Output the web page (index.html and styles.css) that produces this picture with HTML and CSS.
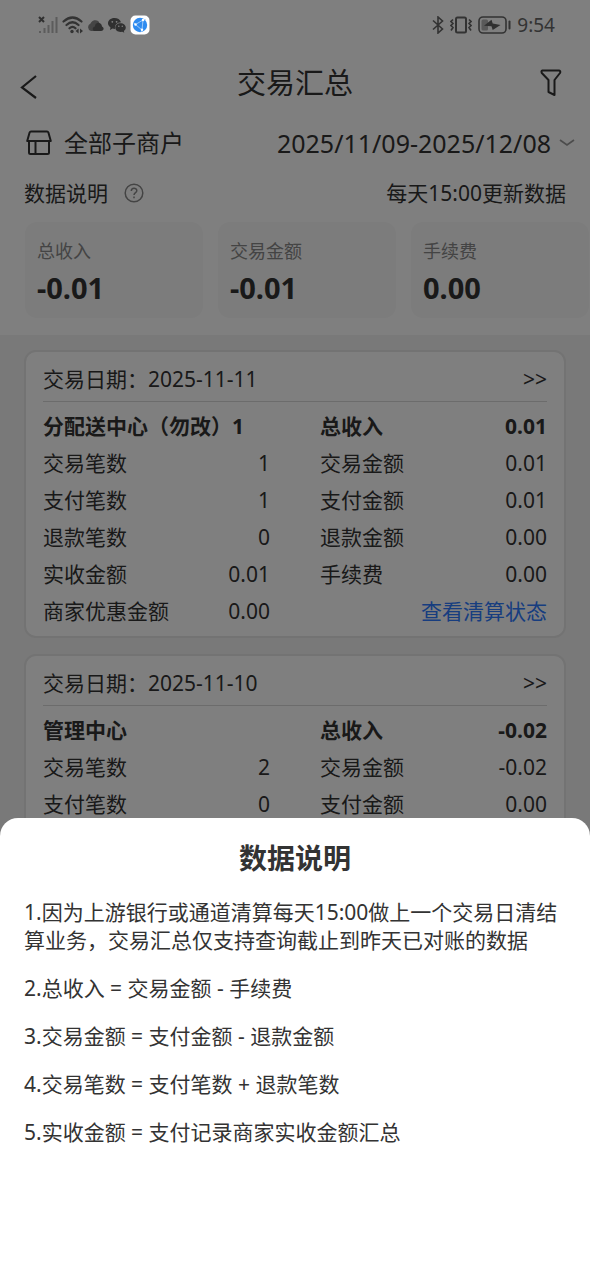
FILE: index.html
```html
<!DOCTYPE html>
<html lang="zh-CN">
<head>
<meta charset="utf-8">
<meta name="viewport" content="width=device-width, initial-scale=1">
<title>交易汇总</title>
<link rel="stylesheet" href="styles.css">
</head>
<body>
<div class="screen">
  <div class="status-bar">
    <div class="status-group">
      <svg class="ico-signal" width="20" height="18" viewBox="0 0 20 18">
        <path d="M1 1l5 5M6 1L1 6" stroke="#303030" stroke-width="2"/>
        <path d="M2 17v-2M6.500 17v-5M10.500 17v-8M14.500 17V5M18.500 17V1" stroke="#5c5c5c" stroke-width="2"/>
      </svg>
      <svg class="ico-wifi" width="21" height="18" viewBox="0 0 21 18" fill="none" stroke="#333" stroke-width="2.200" stroke-linecap="round">
        <path d="M1.500 5.500Q10.500-2.500 19.500 5.500M4.500 9Q10.500 3.500 16.500 9M7.500 12.300Q10.500 9.300 13.500 12.300"/>
        <circle cx="10" cy="15.500" r="1.700" fill="#333" stroke="none"/>
        <path d="M16.600 12.500v5L13.600 15zM18 12.500v5l3-2.500z" fill="#333" stroke="none"/>
      </svg>
      <svg class="ico-cloud" width="17" height="12" viewBox="0 0 17 12">
        <path d="M4 12a4 4 0 0 1-.5-7.500A5 5 0 0 1 12 3l1 9z" fill="#454545"/>
        <path d="M8 12c-3 0-3-4 0-4.500 0-5 6.500-5 7 0C17.500 8.500 17 12 14 12z" fill="#303030"/>
      </svg>
      <svg class="ico-chat" width="18" height="15" viewBox="0 0 18 15">
        <path d="M6.500 0C2.500 0 0 2.500 0 5.300 0 7 1 8.500 2.500 9.500L2 12l2.500-1.400 2.500.3C6.500 7 9 4.500 13 4.300 12.300 1.500 9.500 0 6.500 0z" fill="#303030"/>
        <path d="M12.500 5.200c-3 0-5.200 1.900-5.200 4.400S9.500 14 12.500 14l1.800-.3 2 1.100-.5-1.800c1.300-.8 2-2 2-3.400 0-2.500-2.300-4.400-5.300-4.400z" fill="#303030"/>
        <g fill="#808080"><circle cx="4.300" cy="3.800" r=".9"/><circle cx="8.600" cy="3.800" r=".9"/><circle cx="10.800" cy="8.300" r=".8"/><circle cx="14.300" cy="8.300" r=".8"/></g>
      </svg>
      <svg class="ico-app" width="20" height="20" viewBox="0 0 20 20">
        <rect x=".5" y=".5" width="19" height="19" rx="5" fill="#fff"/>
        <circle cx="10" cy="10" r="7.200" fill="#2f8cf0"/>
        <path d="M13 5L5.500 9.500l6.500 5.500zM13 5l3-.5M5.500 9.500L4 8M12 15l-1 2" fill="none" stroke="#b5d7fb" stroke-width=".8"/>
        <g fill="#fff"><circle cx="13" cy="5" r="1.200"/><circle cx="5.500" cy="9.500" r="1.200"/><circle cx="12" cy="14.800" r="1.200"/></g>
      </svg>
    </div>
    <div class="status-group status-right">
      <svg class="ico-bt" width="12" height="18" viewBox="0 0 12 18" fill="none" stroke="#333" stroke-width="1.600">
        <path d="M1 4.500l9.500 8.500L6 17V1l4.500 4L1 13.500"/>
      </svg>
      <svg class="ico-vibrate" width="22" height="18" viewBox="0 0 22 18" fill="none" stroke="#333" stroke-width="2">
        <rect x="6" y="1.500" width="10" height="15" rx="1.500"/>
        <path d="M3 3.500L1 5.500l2 2-2 2 2 2-2 3M19 3.500l2 2-2 2 2 2-2 2 2 3" stroke-width="1.600"/>
      </svg>
      <svg class="ico-battery" width="33" height="18" viewBox="0 0 33 18">
        <rect x="1" y="1" width="27" height="16" rx="4" fill="none" stroke="#333" stroke-width="1.600"/>
        <rect x="3.500" y="3.500" width="6.500" height="11" rx="1.500" fill="#595959"/>
        <path d="M6 9.700L13.500 3.800l1.200 3.600L22.500 9l-7.800 5-1.200-3.800z" fill="#303030"/>
        <path d="M31.500 5.500v7" stroke="#333" stroke-width="2" stroke-linecap="round"/>
      </svg>
      <span class="clock">9:54</span>
    </div>
  </div>

  <main class="app">
    <section class="summary">
      <header class="nav">
        <button class="icon-button" type="button" aria-label="返回">
          <svg width="18" height="24" viewBox="0 0 18 24" fill="none" stroke="#333" stroke-width="2.200"><path d="M16 1L2 12.500 16 23"/></svg>
        </button>
        <h1 class="nav-title">交易汇总</h1>
        <button class="icon-button nav-filter" type="button" aria-label="筛选">
          <svg width="22" height="28" viewBox="0 0 22 28" fill="none" stroke="#333" stroke-width="2" stroke-linejoin="round"><path d="M2.500 1.500h16.500q2 .5 1 2.500L14.500 11v15l-6-3V11L1.800 4Q.8 2 2.500 1.500z"/></svg>
        </button>
      </header>
      <div class="filters">
        <button class="merchant" type="button">
          <svg width="26" height="26" viewBox="0 0 26 26" fill="none" stroke="#333" stroke-width="2" stroke-linejoin="round"><path d="M5 1.500h16q1 0 1.400 1L24.800 11H1.200L3.600 2.500q.4-1 1.400-1zM3 11v11.500q0 1.500 1.500 1.500h17q1.500 0 1.500-1.500V11M9.500 11v13"/></svg>
          全部子商户
        </button>
        <button class="dates" type="button">
          2025/11/09-2025/12/08
          <svg width="16" height="10" viewBox="0 0 16 10" fill="none" stroke="#999" stroke-width="1.800"><path d="M1 2l7 5 7-5"/></svg>
        </button>
      </div>
      <div class="notes">
        <button class="notes-help" type="button">
          数据说明
          <svg width="20" height="20" viewBox="0 0 20 20" fill="none" stroke="#888" stroke-width="1.500"><circle cx="10" cy="10" r="8.800"/><path d="M7.300 8c0-3.600 5.500-3.600 5.500-.3 0 2-2.800 2-2.800 4.300M10 13.500v1.700"/></svg>
        </button>
        <span>每天15:00更新数据</span>
      </div>
      <dl class="stats">
        <div class="stat"><dt>总收入</dt><dd>-0.01</dd></div>
        <div class="stat"><dt>交易金额</dt><dd>-0.01</dd></div>
        <div class="stat"><dt>手续费</dt><dd>0.00</dd></div>
      </dl>
    </section>

    <section class="records">
      <article class="card">
        <header class="card-head"><span>交易日期：2025-11-11</span><a class="more" href="#">&gt;&gt;</a></header>
        <div class="card-grid">
          <div class="row strong"><span>分配送中心（勿改）1</span></div>
          <div class="row strong"><span>总收入</span><span>0.01</span></div>
          <div class="row"><span>交易笔数</span><span>1</span></div>
          <div class="row"><span>交易金额</span><span>0.01</span></div>
          <div class="row"><span>支付笔数</span><span>1</span></div>
          <div class="row"><span>支付金额</span><span>0.01</span></div>
          <div class="row"><span>退款笔数</span><span>0</span></div>
          <div class="row"><span>退款金额</span><span>0.00</span></div>
          <div class="row"><span>实收金额</span><span>0.01</span></div>
          <div class="row"><span>手续费</span><span>0.00</span></div>
          <div class="row"><span>商家优惠金额</span><span>0.00</span></div>
          <div class="row end"><a class="link" href="#">查看清算状态</a></div>
        </div>
      </article>
      <article class="card card-last">
        <header class="card-head"><span>交易日期：2025-11-10</span><a class="more" href="#">&gt;&gt;</a></header>
        <div class="card-grid">
          <div class="row strong"><span>管理中心</span></div>
          <div class="row strong"><span>总收入</span><span>-0.02</span></div>
          <div class="row"><span>交易笔数</span><span>2</span></div>
          <div class="row"><span>交易金额</span><span>-0.02</span></div>
          <div class="row"><span>支付笔数</span><span>0</span></div>
          <div class="row"><span>支付金额</span><span>0.00</span></div>
        </div>
      </article>
    </section>
  </main>

  <div class="backdrop"></div>
  <section class="sheet" role="dialog" aria-labelledby="sheet-title">
    <h2 class="sheet-title" id="sheet-title">数据说明</h2>
    <div class="sheet-body">
      <p>1.因为上游银行或通道清算每天15:00做上一个交易日清结算业务，交易汇总仅支持查询截止到昨天已对账的数据</p>
      <p>2.总收入 = 交易金额 - 手续费</p>
      <p>3.交易金额 = 支付金额 - 退款金额</p>
      <p>4.交易笔数 = 支付笔数 + 退款笔数</p>
      <p>5.实收金额 = 支付记录商家实收金额汇总</p>
    </div>
  </section>
</div>
</body>
</html>
```
FILE: styles.css
```css
* { box-sizing: border-box; }

body, h1, h2, p, dl, dd { margin: 0; }

body {
  font: 21px/28px "Noto Sans", "Noto Sans CJK SC", sans-serif;
  color: #333;
}

button {
  padding: 0;
  border: 0;
  background: none;
  color: inherit;
  font: inherit;
  cursor: pointer;
}

a { text-decoration: none; color: inherit; }

svg { display: block; flex: none; }

.screen {
  position: relative;
  display: flex;
  flex-direction: column;
  height: 100vh;
  overflow: hidden;
  background: #fff;
}

/* Status bar stays above the backdrop */
.status-bar {
  position: relative;
  z-index: 2;
  display: flex;
  justify-content: space-between;
  align-items: center;
  height: 50px;
  padding: 0 35px 0 38px;
}

.status-group { display: flex; align-items: center; gap: 4px; }

.status-right { gap: 6px; }

.clock { font-size: 19px; color: #333; }

.app { flex: 1; display: flex; flex-direction: column; min-height: 0; }

.nav {
  display: grid;
  grid-template-columns: 1fr auto 1fr;
  align-items: center;
  height: 66px;
  padding: 0 20px;
}

.nav-title { font-size: 29px; line-height: 40px; font-weight: 400; }

.icon-button { display: flex; padding-top: 8px; }

.nav-filter { justify-self: end; padding: 0 8px 0 0; }

.filters, .notes {
  display: flex;
  justify-content: space-between;
  align-items: center;
}

.filters { height: 54px; padding: 0 15px 0 26px; font-size: 24px; }

.merchant, .dates, .notes-help { display: flex; align-items: center; }

.merchant { gap: 12px; }

.dates { gap: 8px; font-size: 25px; }

.notes { height: 46px; padding: 0 24px; }

.notes-help { gap: 16px; }

.stats {
  display: grid;
  grid-template-columns: repeat(3, 1fr);
  gap: 15px;
  padding: 6px 1px 17px 25px;
}

.stat { padding: 14px 12px 9px; border-radius: 12px; background: #f8f8f8; }

.stat dt { font-size: 18px; line-height: 30px; color: #888; }

.stat dd { font-size: 29px; line-height: 43px; font-weight: 700; }

.records {
  flex: 1;
  display: flex;
  flex-direction: column;
  gap: 16px;
  padding: 15px 24px 0;
  background: #f2f2f2;
}

.card {
  padding: 0 17px 6px;
  border: 2px solid #e6e6e6;
  border-radius: 12px;
  background: #fff;
}

.card-last { flex: 1; }

.card-head {
  display: flex;
  justify-content: space-between;
  padding: 6px 0 1px;
  border-bottom: 1px solid #d8d8d8;
  line-height: 42px;
}

.card-grid {
  display: grid;
  grid-template-columns: 1fr 1fr;
  column-gap: 50px;
  padding-top: 6px;
}

.row {
  display: flex;
  justify-content: space-between;
  line-height: 37px;
  white-space: nowrap;
}

.strong { font-weight: 700; }

.end { justify-content: flex-end; }

.link { color: #2f7bff; }

.backdrop { position: absolute; inset: 0; z-index: 1; background: rgba(0, 0, 0, .5); }

.sheet {
  position: absolute;
  inset: auto 0 0;
  z-index: 3;
  min-height: 36vh;
  padding: 20px 24px;
  border-radius: 18px 18px 0 0;
  background: #fff;
}

.sheet-title { font-size: 28px; line-height: 40px; font-weight: 700; text-align: center; }

.sheet-body { display: grid; gap: 20px; padding-top: 20px; }
```
